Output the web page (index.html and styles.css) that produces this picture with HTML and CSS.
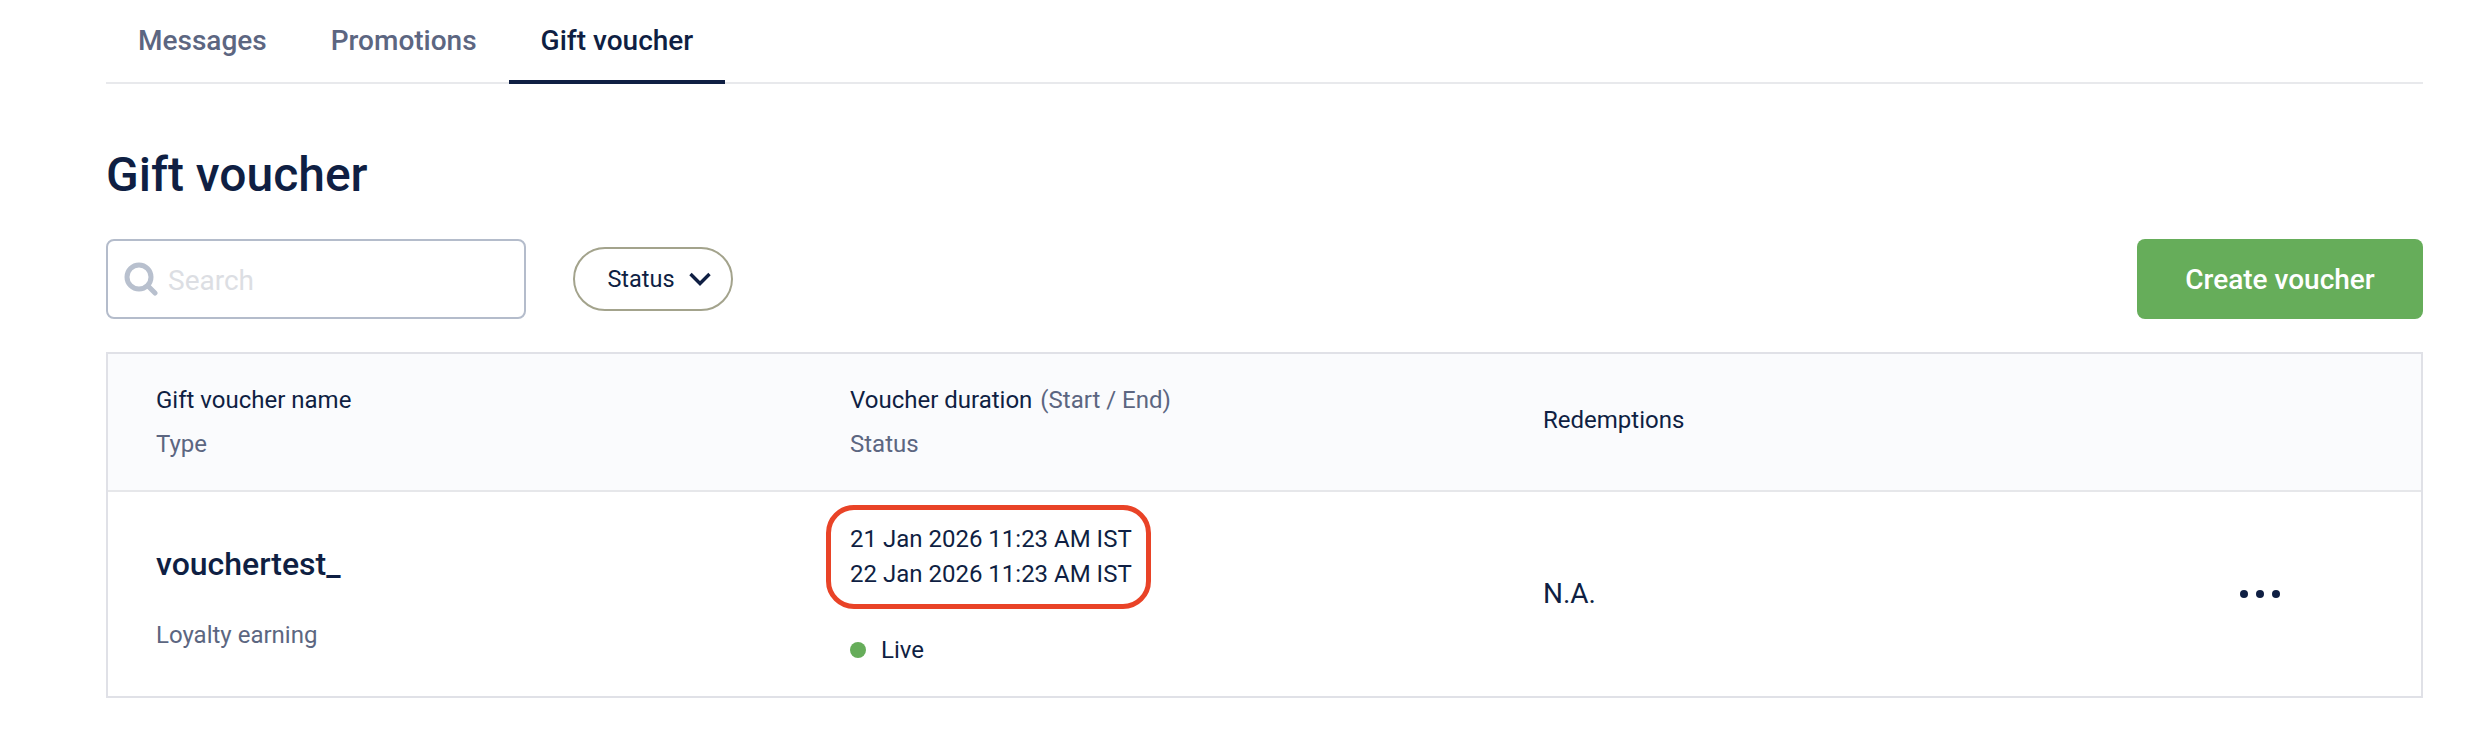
FILE: index.html
```html
<!DOCTYPE html>
<html lang="en">
<head>
<meta charset="utf-8">
<title>Gift voucher</title>
<link rel="stylesheet" href="styles.css">
</head>
<body>
<main class="page">
  <nav class="tabs">
    <a class="tab">Messages</a>
    <a class="tab">Promotions</a>
    <a class="tab tab-active">Gift voucher</a>
  </nav>
  <h1 class="title">Gift voucher</h1>
  <div class="toolbar">
    <label class="search">
      <svg class="search-icon" viewBox="0 0 34 34" aria-hidden="true"><circle cx="15" cy="15" r="12" fill="none" stroke="#b8c0ce" stroke-width="5"/><path d="M24 24l7 7" fill="none" stroke="#b8c0ce" stroke-width="5" stroke-linecap="round"/></svg>
      <span class="placeholder">Search</span>
    </label>
    <button class="filter">Status
      <svg class="chevron" viewBox="0 0 22 14" aria-hidden="true"><path d="M1.5 2l9.5 9.5L20.5 2" fill="none" stroke="#0f1f43" stroke-width="3.4"/></svg>
    </button>
    <button class="create">Create voucher</button>
  </div>
  <section class="table">
    <div class="row head">
      <div class="cell">
        <div class="label">Gift voucher name</div>
        <div class="sub">Type</div>
      </div>
      <div class="cell">
        <div class="label">Voucher duration <span class="hint">(Start / End)</span></div>
        <div class="sub">Status</div>
      </div>
      <div class="cell cell-mid"><div class="label">Redemptions</div></div>
      <div class="cell"></div>
    </div>
    <div class="row body">
      <div class="cell name-cell">
        <div class="name">vouchertest_</div>
        <div class="type">Loyalty earning</div>
      </div>
      <div class="cell date-cell">
        <div class="dates">
          <div>21 Jan 2026 11:23 AM IST</div>
          <div>22 Jan 2026 11:23 AM IST</div>
          <span class="annotation"></span>
        </div>
        <div class="status"><span class="dot"></span>Live</div>
      </div>
      <div class="cell cell-mid"><div class="value">N.A.</div></div>
      <div class="cell cell-mid more"><span></span><span></span><span></span></div>
    </div>
  </section>
</main>
</body>
</html>
```
FILE: styles.css
```css
* { box-sizing: border-box; }
html, body { margin: 0; background: #fff; }
body { font-family: Roboto, "Liberation Sans", sans-serif; color: #0f1f43; }
.page { padding: 0 53px 0 106px; height: 740px; overflow: hidden; }

.tabs { display: flex; height: 84px; border-bottom: 2px solid #e8e9ec; padding-left: 32px; gap: 64px; }
.tab { font-size: 28px; font-weight: 500; color: #5c6681; line-height: 81px; height: 84px; }
.tab-active { color: #0f1f43; position: relative; }
.tab-active::after { content: ""; position: absolute; left: -32px; right: -32px; bottom: 0; height: 4px; background: #0f1f43; }

.title { margin: 0; padding-top: 65px; font-size: 48px; line-height: 52px; font-weight: 500; }

.toolbar { display: flex; align-items: center; margin-top: 38px; height: 80px; }
.search { display: flex; align-items: center; width: 420px; height: 80px; border: 2px solid #b4bccb; border-radius: 8px; padding-left: 16px; gap: 10px; }
.search-icon { width: 34px; height: 34px; }
.placeholder { font-size: 28px; color: #dcdee3; padding-top: 2px; }
.filter { display: flex; align-items: center; justify-content: center; gap: 14px; margin-left: 47px; width: 160px; height: 64px; background: #fff; border: 2px solid #a3a38c; border-radius: 32px; font: 400 23.5px Roboto, sans-serif; color: #0f1f43; padding: 0 0 0 12px; }
.chevron { width: 22px; height: 14px; flex: none; }
.create { margin-left: auto; width: 286px; height: 80px; border: 0; border-radius: 8px; background: #66ad5a; color: #fff; font: 500 28px Roboto, sans-serif; padding: 0; }

.table { margin-top: 33px; border: 2px solid #e0e1e7; }
.row { display: grid; grid-template-columns: 694px 693px 1fr 181px; }
.head { height: 136px; background: #fafbfd; }
.body { height: 206px; border-top: 2px solid #e6e7ea; }
.cell { padding-left: 48px; }
.cell-mid { display: flex; align-items: center; }
.head .cell:not(.cell-mid) { padding-top: 29px; }
.head .cell-mid { padding-bottom: 5px; }
.label { font-size: 24px; line-height: 34px; }
.hint { color: #5c6681; margin-left: 2px; }
.sub { font-size: 24px; line-height: 34px; margin-top: 10px; color: #5c6681; }
.name-cell { padding-top: 52px; }
.name { font-size: 32px; font-weight: 500; line-height: 40px; }
.type { font-size: 24px; line-height: 34px; margin-top: 34px; color: #5c6681; }
.date-cell { padding-top: 30px; }
.dates { position: relative; font-size: 24px; line-height: 35px; }
.annotation { position: absolute; left: -24px; top: -17px; width: 325px; height: 104px; border: 5px solid #e94327; border-radius: 28px; }
.status { display: flex; align-items: center; font-size: 24px; line-height: 34px; margin-top: 41px; }
.dot { width: 16px; height: 16px; border-radius: 50%; background: #66ad5a; margin-right: 15px; }
.value { font-size: 28px; line-height: 34px; }
.more { gap: 8px; padding-left: 0; }
.more span { width: 8px; height: 8px; border-radius: 50%; background: #0f1f43; }
```
